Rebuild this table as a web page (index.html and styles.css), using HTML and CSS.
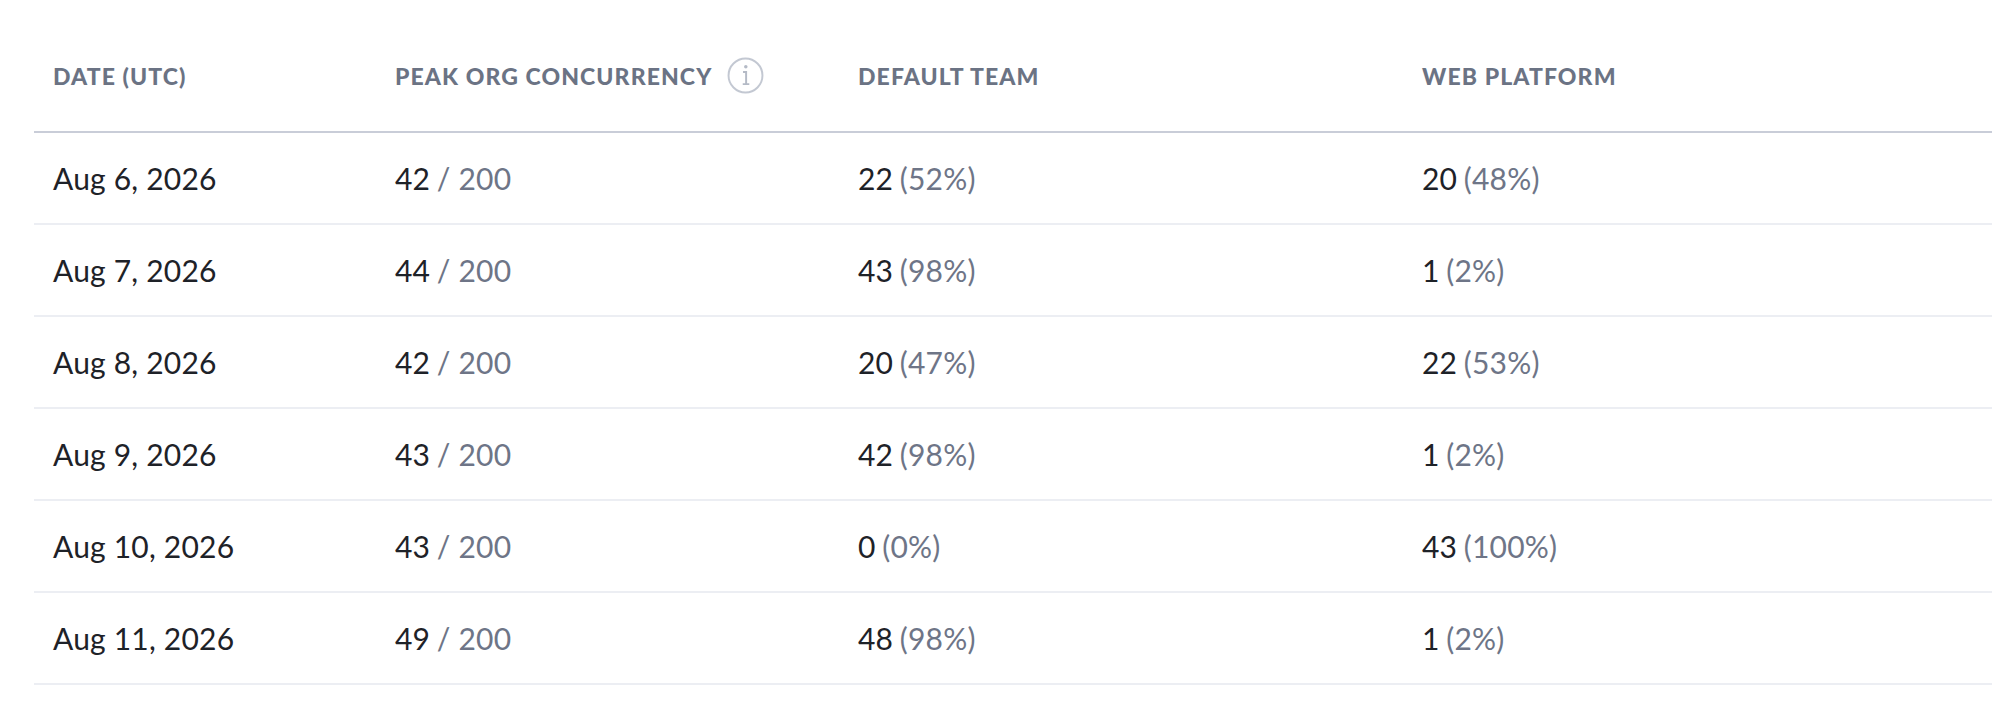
FILE: index.html
```html
<!DOCTYPE html>
<html lang="en">
<head>
<meta charset="utf-8">
<title>Concurrency</title>
<link rel="stylesheet" href="styles.css">
</head>
<body>
<div class="table">
  <div class="row head">
    <div class="cell">DATE (UTC)</div>
    <div class="cell"><span>PEAK ORG CONCURRENCY</span><svg class="info" width="37" height="37" viewBox="0 0 36 36" aria-hidden="true"><circle cx="18" cy="18" r="16.5" fill="none" stroke="#c3c8d2" stroke-width="1.9"/><circle cx="18.3" cy="9.6" r="1.7" fill="#b4bac6"/><path d="M15.6 14.6 H18.6 V26.4 M15.3 26.4 H21.7" fill="none" stroke="#b4bac6" stroke-width="1.9"/></svg></div>
    <div class="cell">DEFAULT TEAM</div>
    <div class="cell">WEB PLATFORM</div>
  </div>
  <div class="row">
    <div class="cell">Aug 6, 2026</div>
    <div class="cell">42 <span class="muted">/ 200</span></div>
    <div class="cell">22 <span class="muted">(52%)</span></div>
    <div class="cell">20 <span class="muted">(48%)</span></div>
  </div>
  <div class="row">
    <div class="cell">Aug 7, 2026</div>
    <div class="cell">44 <span class="muted">/ 200</span></div>
    <div class="cell">43 <span class="muted">(98%)</span></div>
    <div class="cell">1 <span class="muted">(2%)</span></div>
  </div>
  <div class="row">
    <div class="cell">Aug 8, 2026</div>
    <div class="cell">42 <span class="muted">/ 200</span></div>
    <div class="cell">20 <span class="muted">(47%)</span></div>
    <div class="cell">22 <span class="muted">(53%)</span></div>
  </div>
  <div class="row">
    <div class="cell">Aug 9, 2026</div>
    <div class="cell">43 <span class="muted">/ 200</span></div>
    <div class="cell">42 <span class="muted">(98%)</span></div>
    <div class="cell">1 <span class="muted">(2%)</span></div>
  </div>
  <div class="row">
    <div class="cell">Aug 10, 2026</div>
    <div class="cell">43 <span class="muted">/ 200</span></div>
    <div class="cell">0 <span class="muted">(0%)</span></div>
    <div class="cell">43 <span class="muted">(100%)</span></div>
  </div>
  <div class="row">
    <div class="cell">Aug 11, 2026</div>
    <div class="cell">49 <span class="muted">/ 200</span></div>
    <div class="cell">48 <span class="muted">(98%)</span></div>
    <div class="cell">1 <span class="muted">(2%)</span></div>
  </div>
</div>
</body>
</html>
```

FILE: styles.css
```css
html, body {
  margin: 0;
  padding: 0;
  background: #ffffff;
}

body {
  font-family: "Lato", "Liberation Sans", sans-serif;
  color: #1e2228;
}

.table {
  margin: 20px 7px 0 34px;
}

.row {
  display: grid;
  grid-template-columns: 342px 463px 564px 1fr;
  height: 90px;
  border-bottom: 2px solid #eceef3;
  font-size: 30px;
  letter-spacing: 0.2px;
}

.row.head {
  height: 111px;
  border-bottom: 2px solid #c9cdd8;
  font-size: 23px;
  font-weight: 900;
  color: #6b7384;
  letter-spacing: 1.1px;
}

.cell {
  display: flex;
  align-items: center;
  padding-left: 19px;
  white-space: nowrap;
}

.info {
  margin-left: 15px;
  flex: none;
}

.muted {
  color: #6e7587;
  margin-left: 0.22em;
}
```
